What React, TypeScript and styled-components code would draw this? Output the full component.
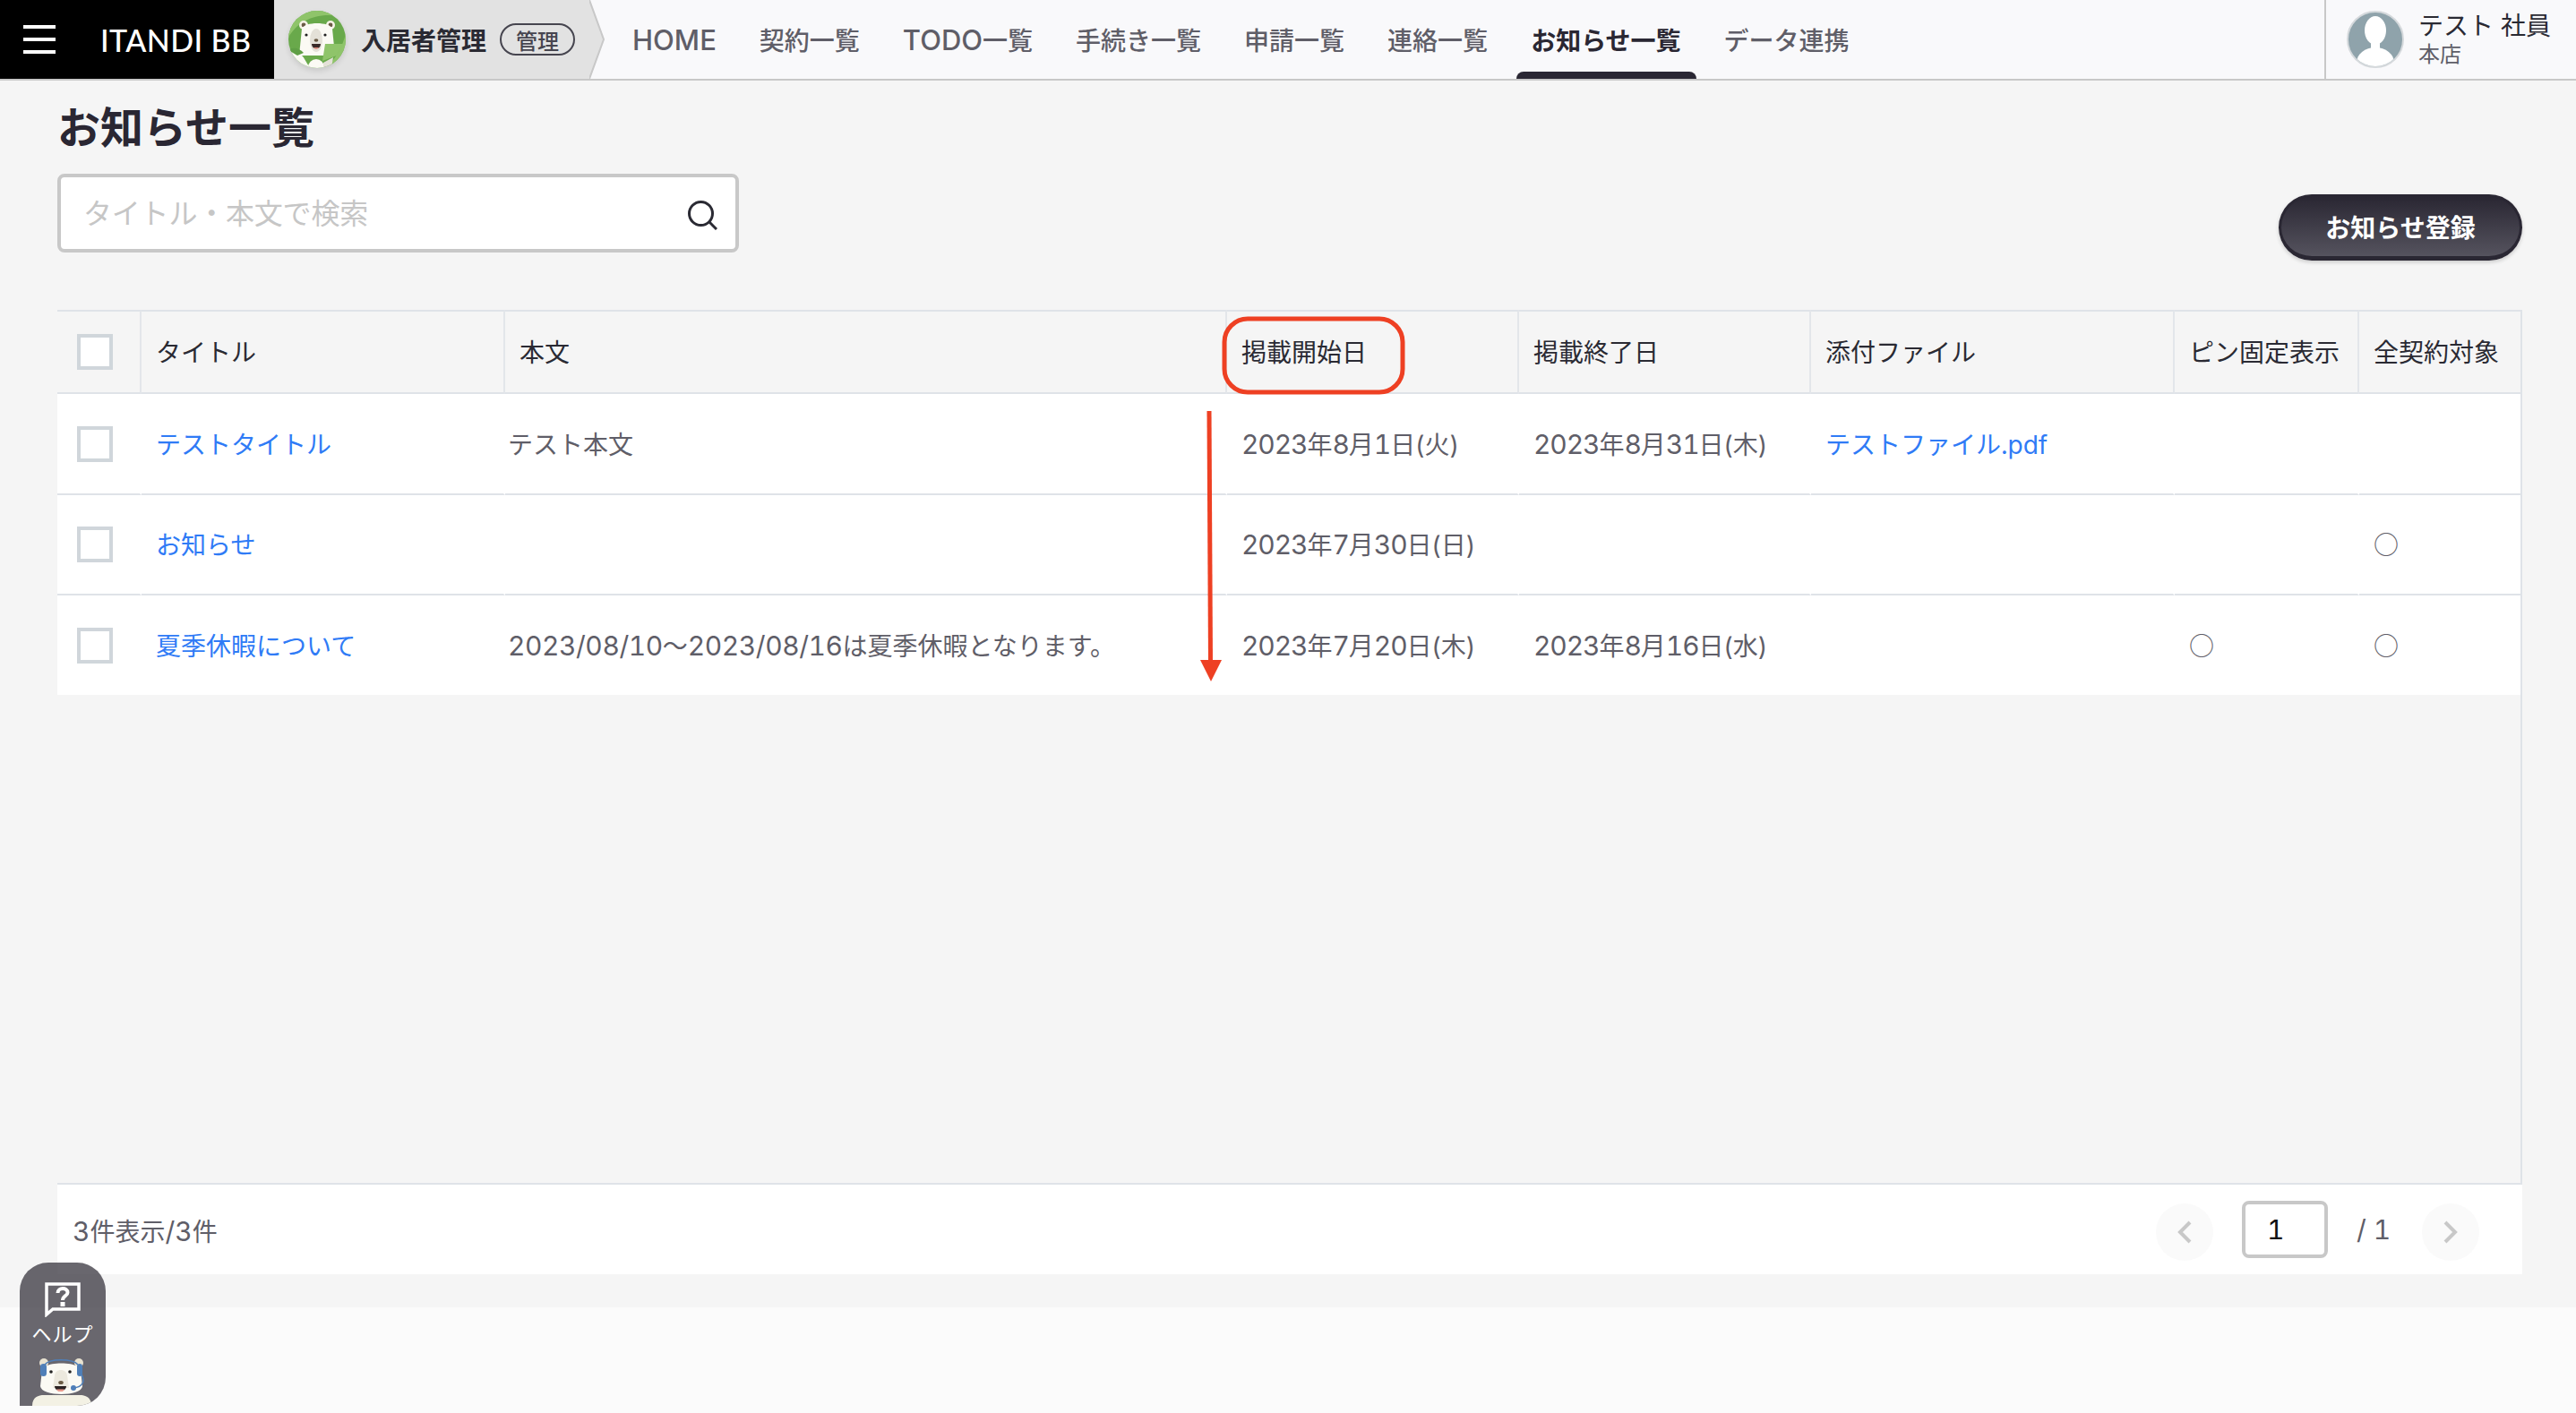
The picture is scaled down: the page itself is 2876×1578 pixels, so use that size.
import React from "react";
import styled, { createGlobalStyle } from "styled-components";

const FONT = `Inter, "Noto Sans CJK JP", sans-serif`;

const GlobalStyle = createGlobalStyle`
    html, body {
        margin: 0;
        height: 100%;
        background: #fbfbfb;
        font-family: ${FONT};
        overflow: hidden;
    }
    * { box-sizing: border-box; }
`;

const Page = styled.div`
    position: relative;
    height: 100vh;
    display: flex;
    flex-direction: column;
`;

const Header = styled.header`
    height: 90px;
    flex: none;
    display: flex;
    background: #f9f9fb;
    border-bottom: 2px solid #c8c8c8;
`;

const Brand = styled.div`
    width: 306px;
    background: #000;
    display: flex;
    align-items: center;
    padding-left: 26px;
    gap: 50px;
`;

const Burger = styled.div`
    width: 36px;
    height: 32px;
    display: flex;
    flex-direction: column;
    justify-content: space-between;
    span {
        height: 4px;
        background: #fff;
    }
`;

const Logo = styled.div`
    color: #fff;
    font-family: Lato, sans-serif;
    font-size: 34px;
    font-weight: 500;
    letter-spacing: 0.4px;
    white-space: nowrap;
`;

const ProductTab = styled.div`
    width: 352px;
    background: #e2e2e2;
    display: flex;
    align-items: center;
    padding-left: 16px;
`;

const BearBadge = styled.div`
    width: 64px;
    height: 64px;
    border-radius: 50%;
    overflow: hidden;
    box-shadow: 0 3px 6px rgba(0, 0, 0, 0.12);
    flex: none;
    svg { display: block; }
`;

const ProductName = styled.span`
    margin-left: 17px;
    font-size: 28px;
    font-weight: 700;
    color: #2a2a33;
    white-space: nowrap;
`;

const RoleBadge = styled.span`
    margin-left: 15px;
    width: 84px;
    height: 36px;
    border: 2px solid #46454f;
    border-radius: 18px;
    display: flex;
    align-items: center;
    justify-content: center;
    font-size: 24px;
    font-weight: 500;
    color: #46454f;
`;

const TabTip = styled.svg`
    flex: none;
    display: block;
`;

const Nav = styled.nav`
    display: flex;
    gap: 15px;
    margin-left: 14px;
`;

const NavItem = styled.a<{ $active?: boolean }>`
    position: relative;
    display: flex;
    align-items: center;
    padding: 0 17px 0 16px;
    font-size: 28px;
    font-weight: ${(p) => (p.$active ? 700 : 500)};
    color: ${(p) => (p.$active ? "#2a2733" : "#5f5e68")};
    white-space: nowrap;
    ${(p) =>
        p.$active &&
        `&::after {
            content: "";
            position: absolute;
            left: 0;
            right: 0;
            bottom: 0;
            height: 8px;
            background: #2a2733;
            border-radius: 8px 8px 0 0;
        }`}
`;

const UserPanel = styled.div`
    margin-left: auto;
    width: 281px;
    border-left: 2px solid #c8c8c8;
    display: flex;
    align-items: center;
    padding-left: 23px;
    gap: 16px;
`;

const UserAvatar = styled.svg`
    flex: none;
    display: block;
`;

const UserText = styled.div`
    display: flex;
    flex-direction: column;
    margin-bottom: 2px;
`;

const UserName = styled.span`
    font-size: 28px;
    line-height: 36px;
    color: #2a2a33;
    white-space: pre;
`;

const UserShop = styled.span`
    font-size: 24px;
    line-height: 28px;
    color: #5f5e68;
`;

const Main = styled.main`
    height: 1370px;
    flex: none;
    background: #f5f5f5;
    padding: 17px 60px 37px 64px;
    display: flex;
    flex-direction: column;
`;

const Title = styled.h1`
    margin: 0;
    font-size: 48px;
    line-height: 72px;
    font-weight: 700;
    color: #2a2733;
`;

const ToolRow = styled.div`
    margin-top: 15px;
    height: 97px;
    display: flex;
    justify-content: space-between;
`;

const SearchBox = styled.div`
    width: 761px;
    height: 88px;
    background: #fff;
    border: 4px solid #c8c8c8;
    border-radius: 8px;
    display: flex;
    align-items: center;
    padding: 0 20px 0 23px;
    svg { flex: none; margin-top: 4px; }
`;

const SearchInput = styled.input`
    flex: 1;
    min-width: 0;
    border: 0;
    outline: 0;
    background: transparent;
    font-family: ${FONT};
    font-size: 32px;
    letter-spacing: -0.2px;
    color: #2a2733;
    &::placeholder { color: #c6c6c6; opacity: 1; }
`;

const PrimaryButton = styled.button`
    align-self: flex-end;
    width: 272px;
    height: 74px;
    border: 3px solid #2a2733;
    border-bottom-width: 5px;
    border-radius: 37px;
    background: linear-gradient(#2a2733, #55535e);
    box-shadow: 0 2px 4px rgba(0, 0, 0, 0.18);
    color: #fff;
    font-family: ${FONT};
    font-size: 28px;
    font-weight: 700;
    padding: 0;
`;

const TablePanel = styled.section`
    margin-top: 55px;
    flex: 1;
    display: flex;
    flex-direction: column;
`;

const TableArea = styled.div`
    flex: 1;
    border-right: 2px solid #dfe3e8;
    border-bottom: 2px solid #dfe3e8;
`;

const Table = styled.table`
    width: 2750px;
    table-layout: fixed;
    border-collapse: separate;
    border-spacing: 0;
`;

const Th = styled.th`
    height: 94px;
    padding: 0 0 2px 16px;
    border-top: 2px solid #dfe3e8;
    border-bottom: 2px solid #dfe3e8;
    border-right: 2px solid #e3e6ea;
    font-size: 28px;
    font-weight: 400;
    text-align: left;
    color: #2a2a33;
    white-space: nowrap;
    &:last-child { border-right: 0; }
`;

const Tr = styled.tr`
    &:first-child td { height: 113px; }
    &:last-child td { height: 111px; border-bottom: 0; }
`;

const Td = styled.td<{ $tight?: boolean }>`
    height: 112px;
    padding: 0 0 2px ${(p) => (p.$tight ? 3 : 16)}px;
    background: #fff;
    border-bottom: 2px solid #dfe3e8;
    border-right: 2px solid #fff;
    font-size: 28px;
    color: #5f5e68;
    white-space: nowrap;
    &:last-child { border-right: 0; }
`;

const CheckCell = styled(Td)`
    padding: 0 0 0 22px;
`;

const HeadCheckCell = styled(Th)`
    padding: 0 0 0 22px;
`;

const CheckBox = styled.span`
    display: block;
    width: 40px;
    height: 40px;
    background: #fff;
    border: 4px solid #d0d6db;
`;

const Link = styled.a`
    color: #2f7bf6;
`;

// 欧文だけ和文より少し大きく見えるので別サイズにする
const Latin = styled.span<{ $size?: number; $track?: number }>`
    font-size: ${(p) => p.$size ?? 30}px;
    letter-spacing: ${(p) => p.$track ?? 0}px;
    font-variant-numeric: tabular-nums;
    line-height: 1;
`;

const Mark = styled.span`
    font-family: "Noto Sans CJK JP", sans-serif;
    font-size: 28px;
`;

const Pager = styled.div`
    height: 100px;
    flex: none;
    background: #fff;
    display: flex;
    align-items: center;
    justify-content: space-between;
    padding: 0 48px 0 17px;
`;

const PagerCount = styled.span`
    font-size: 28px;
    color: #5f5e68;
    margin-top: 2px;
`;

const PagerControls = styled.div`
    display: flex;
    align-items: center;
`;

const PageArrow = styled.button`
    width: 64px;
    height: 64px;
    margin-top: 6px;
    padding: 0;
    border: 0;
    border-radius: 50%;
    background: #fafafa;
    display: flex;
    align-items: center;
    justify-content: center;
`;

const PageInput = styled.input`
    width: 96px;
    height: 64px;
    margin-left: 32px;
    border: 4px solid #c8c8c8;
    border-radius: 8px;
    padding: 0 0 0 24px;
    outline: 0;
    font-family: ${FONT};
    font-size: 30px;
    font-variant-numeric: tabular-nums;
    color: #111;
`;

const PageTotal = styled.span`
    width: 73px;
    margin-left: 32px;
    font-size: 30px;
    font-variant-numeric: tabular-nums;
    color: #5f5e68;
    white-space: pre;
`;

const HelpTab = styled.div`
    position: absolute;
    left: 22px;
    top: 1410px;
    width: 96px;
    height: 160px;
    border-radius: 32px 32px 32px 0;
    background: rgba(72, 70, 78, 0.82);
    display: flex;
    flex-direction: column;
    align-items: center;
    overflow: hidden;
    padding-top: 22px;
    svg { flex: none; display: block; }
`;

const HelpLabel = styled.span`
    margin-top: 4px;
    font-size: 22px;
    line-height: 30px;
    letter-spacing: 1px;
    color: #fff;
    white-space: nowrap;
`;

const HelpBear = styled.svg`
    margin-top: 11px;
`;

const Marker = styled.svg`
    position: absolute;
    left: 0;
    top: 0;
    pointer-events: none;
`;

const navItems = ["HOME", "契約一覧", "TODO一覧", "手続き一覧", "申請一覧", "連絡一覧", "お知らせ一覧", "データ連携"];

const columns = ["タイトル", "本文", "掲載開始日", "掲載終了日", "添付ファイル", "ピン固定表示", "全契約対象"];
const colWidths = [94, 406, 806, 326, 326, 406, 206, 180];

const rows = [
    { title: "テストタイトル", body: "テスト本文", start: "2023年8月1日(火)", end: "2023年8月31日(木)", file: "テストファイル.pdf", pin: false, all: false },
    { title: "お知らせ", body: "", start: "2023年7月30日(日)", end: "", file: "", pin: false, all: true },
    { title: "夏季休暇について", body: "2023/08/10〜2023/08/16は夏季休暇となります。", start: "2023年7月20日(木)", end: "2023年8月16日(水)", file: "", pin: true, all: true },
];

function Mixed({ text, size, track }: { text: string; size?: number; track?: number }) {
    return (
        <>
            {text.split(/([A-Za-z0-9/.]+)/).map((part, i) =>
                i % 2 === 1 ? (
                    <Latin key={i} $size={size} $track={track}>
                        {part}
                    </Latin>
                ) : (
                    part
                )
            )}
        </>
    );
}

function GreenBear() {
    return (
        <svg width="64" height="64" viewBox="0 0 64 64">
            <rect width="64" height="64" fill="#69a94b" />
            <path d="M0 30 C10 12 30 2 56 6 L44 0 L0 0Z" fill="#8fc46a" />
            <path d="M42 64 C54 52 60 40 64 26 L64 64Z" fill="#8fc46a" />
            <circle cx="17" cy="16" r="5" fill="#f6f3e6" />
            <circle cx="47" cy="16" r="5" fill="#f6f3e6" />
            <circle cx="17" cy="16" r="2.4" fill="#6a5b45" />
            <circle cx="47" cy="16" r="2.4" fill="#6a5b45" />
            <path d="M15 20 C18 12 46 12 49 20 L52 50 L12 50Z" fill="#fbfaf4" />
            <ellipse cx="31" cy="33" rx="7" ry="13" fill="#e4e1d8" />
            <circle cx="20" cy="27" r="1.6" fill="#222" />
            <circle cx="41" cy="27" r="1.6" fill="#222" />
            <ellipse cx="31" cy="33" rx="2.4" ry="1.8" fill="#6a5b45" />
            <path d="M26 37 H36 C36 44 26 44 26 37Z" fill="#3a2a28" />
            <path d="M28 41 H34 L32.5 42.4 H29.5Z" fill="#e68a7a" />
            <path d="M41 37 H61 L54 50 L38 56Z" fill="#8fc46a" />
            <path d="M0 47 C6 44 14 46 18 54 L24 64 H0Z" fill="#fbfaf4" />
            <path d="M0 44 C6 40 12 42 17 47 L10 50Z" fill="#5f9f45" />
            <circle cx="31" cy="63" r="9" fill="#fbfaf4" />
            <path d="M39 58 L50 52 L48 64 L39 64Z" fill="#e4e1d8" />
        </svg>
    );
}

function HelpBearArt() {
    return (
        <HelpBear width="70" height="54" viewBox="0 0 70 54">
            <circle cx="14" cy="6" r="5" fill="#e8e2d0" />
            <circle cx="53" cy="6" r="5" fill="#e8e2d0" />
            <path d="M1 54 C1 44 8 42 14 42 H54 C60 42 67 44 67 54Z" fill="#f3f1e4" />
            <path d="M12 14 C14 4 53 4 55 14 L57 32 C56 44 11 44 10 32Z" fill="#fbfaf4" />
            <path d="M26 20 C27 12 39 12 40 20 L42 34 H24Z" fill="#ece9de" />
            <circle cx="22" cy="16" r="1.8" fill="#222" />
            <circle cx="43" cy="16" r="1.8" fill="#222" />
            <ellipse cx="33" cy="28" rx="2.8" ry="2" fill="#6a5b45" />
            <path d="M26 32 H39 C39 39 26 39 26 32Z" fill="#2a2222" />
            <path d="M28 35.5 H37 L35 38 H30Z" fill="#e89a8c" />
            <path d="M15 8 C20 1 46 1 52 8" fill="none" stroke="#4f7fb8" strokeWidth="1.6" />
            <rect x="10" y="7" width="7" height="14" rx="3.5" fill="#4f7fb8" />
            <rect x="51" y="7" width="6" height="14" rx="3" fill="#4f7fb8" />
            <path d="M56 19 C60 26 58 33 47 34" fill="none" stroke="#4f7fb8" strokeWidth="1.6" />
            <circle cx="47" cy="34" r="3" fill="#4f7fb8" />
        </HelpBear>
    );
}

function Chevron({ left }: { left?: boolean }) {
    return (
        <svg width="16" height="26" viewBox="0 0 16 26">
            <path d={left ? "M14 2 L3 13 L14 24" : "M2 2 L13 13 L2 24"} fill="none" stroke="#c8c8c8" strokeWidth="4" />
        </svg>
    );
}

export default function App() {
    return (
        <Page>
            <GlobalStyle />
            <Header>
                <Brand>
                    <Burger>
                        <span />
                        <span />
                        <span />
                    </Burger>
                    <Logo>ITANDI BB</Logo>
                </Brand>
                <ProductTab>
                    <BearBadge>
                        <GreenBear />
                    </BearBadge>
                    <ProductName>入居者管理</ProductName>
                    <RoleBadge>管理</RoleBadge>
                </ProductTab>
                <TabTip width="18" height="88" viewBox="0 0 18 88">
                    <path d="M0 0 L16 44 L0 88Z" fill="#e2e2e2" />
                    <path d="M0 0 L16 44 L0 88" fill="none" stroke="#c8c8c8" strokeWidth="2" />
                </TabTip>
                <Nav>
                    {navItems.map((item) => (
                        <NavItem key={item} $active={item === "お知らせ一覧"}>
                            <Mixed text={item} size={31} />
                        </NavItem>
                    ))}
                </Nav>
                <UserPanel>
                    <UserAvatar width="64" height="64" viewBox="0 0 64 64">
                        <clipPath id="avatarClip">
                            <circle cx="32" cy="32" r="30" />
                        </clipPath>
                        <circle cx="32" cy="32" r="31" fill="#8fa3ab" stroke="#d5d9dc" strokeWidth="2" />
                        <g clipPath="url(#avatarClip)" fill="#fff">
                            <ellipse cx="32" cy="22" rx="12" ry="16" />
                            <rect x="27" y="32" width="10" height="14" />
                            <ellipse cx="32" cy="58" rx="21" ry="17" />
                        </g>
                    </UserAvatar>
                    <UserText>
                        <UserName>テスト 社員</UserName>
                        <UserShop>本店</UserShop>
                    </UserText>
                </UserPanel>
            </Header>
            <Main>
                <Title>お知らせ一覧</Title>
                <ToolRow>
                    <SearchBox>
                        <SearchInput placeholder="タイトル・本文で検索" />
                        <svg width="34" height="34" viewBox="0 0 34 34">
                            <circle cx="15.5" cy="15.5" r="13" fill="none" stroke="#2a2a33" strokeWidth="3" />
                            <path d="M25 25 L33 33" stroke="#2a2a33" strokeWidth="3" />
                        </svg>
                    </SearchBox>
                    <PrimaryButton>お知らせ登録</PrimaryButton>
                </ToolRow>
                <TablePanel>
                    <TableArea>
                        <Table>
                            <colgroup>
                                {colWidths.map((w, i) => (
                                    <col key={i} width={w} />
                                ))}
                            </colgroup>
                            <thead>
                                <tr>
                                    <HeadCheckCell>
                                        <CheckBox />
                                    </HeadCheckCell>
                                    {columns.map((c) => (
                                        <Th key={c}>{c}</Th>
                                    ))}
                                </tr>
                            </thead>
                            <tbody>
                                {rows.map((r) => (
                                    <Tr key={r.title}>
                                        <CheckCell>
                                            <CheckBox />
                                        </CheckCell>
                                        <Td>
                                            <Link>{r.title}</Link>
                                        </Td>
                                        <Td $tight>
                                            <Mixed text={r.body} track={-0.45} />
                                        </Td>
                                        <Td>
                                            <Mixed text={r.start} track={-1.1} />
                                        </Td>
                                        <Td>
                                            <Mixed text={r.end} track={-1.1} />
                                        </Td>
                                        <Td>
                                            {r.file && (
                                                <Link>
                                                    <Mixed text={r.file} size={28} />
                                                </Link>
                                            )}
                                        </Td>
                                        <Td>{r.pin && <Mark>○</Mark>}</Td>
                                        <Td>{r.all && <Mark>○</Mark>}</Td>
                                    </Tr>
                                ))}
                            </tbody>
                        </Table>
                    </TableArea>
                    <Pager>
                        <PagerCount>
                            <Mixed text="3件表示/3件" />
                        </PagerCount>
                        <PagerControls>
                            <PageArrow>
                                <Chevron left />
                            </PageArrow>
                            <PageInput defaultValue="1" />
                            <PageTotal>/ 1</PageTotal>
                            <PageArrow>
                                <Chevron />
                            </PageArrow>
                        </PagerControls>
                    </Pager>
                </TablePanel>
            </Main>
            <HelpTab>
                <svg width="40" height="39" viewBox="0 0 40 39">
                    <path d="M2 2 H38 V30 H9 L2 36Z" fill="none" stroke="#fff" strokeWidth="3.5" />
                    <path d="M14.5 12 C14.5 5.5 25.5 5.5 25.5 11.5 C25.5 15.5 20 15 20 20" fill="none" stroke="#fff" strokeWidth="4" />
                    <rect x="17.5" y="22" width="5" height="5" fill="#fff" />
                </svg>
                <HelpLabel>ヘルプ</HelpLabel>
                <HelpBearArt />
            </HelpTab>
            <Marker width="2876" height="1578" viewBox="0 0 2876 1578">
                <rect x="1367" y="356" width="199" height="82" rx="26" fill="none" stroke="#ee4023" strokeWidth="5" />
                <path d="M1350 459 L1351.5 740" stroke="#ee4023" strokeWidth="5" />
                <path d="M1340 737 H1364 L1352 761Z" fill="#ee4023" />
            </Marker>
        </Page>
    );
}
